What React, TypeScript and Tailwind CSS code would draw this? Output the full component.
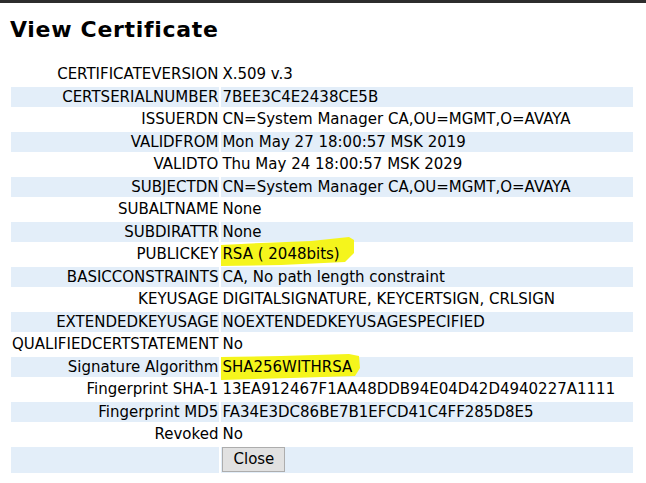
import React from 'react';

interface CertRow {
    label: string;
    value: React.ReactNode;
}

// marker-pen highlight drawn behind a bit of text
const Highlight: React.FC<{ children: React.ReactNode; variant: 'key' | 'sig' }> = ({ children, variant }) => {
    if (variant === 'key') {
        return (
            <span className="relative inline-block">
                <svg className="absolute left-[-1px] top-[-8px] w-[134px] h-[29px]" viewBox="0 0 134 29">
                    <path d="M0 8 L40 6 L90 4 L128 0 L133 3 L133 16 L124 25 L60 28 L0 29 Z" fill="#f5f51c" />
                </svg>
                <span className="relative">{children}</span>
            </span>
        );
    }
    return (
        <span className="relative inline-block">
            <svg className="absolute left-[-1px] top-[-4px] w-[140px] h-[26px]" viewBox="0 0 140 26">
                <path d="M0 3 L60 2 L128 0 L138 2 L139 14 L134 22 L70 24 L0 26 Z" fill="#f5f51c" />
            </svg>
            <span className="relative">{children}</span>
        </span>
    );
};

const rows: CertRow[] = [
    { label: 'CERTIFICATEVERSION', value: 'X.509 v.3' },
    { label: 'CERTSERIALNUMBER', value: '7BEE3C4E2438CE5B' },
    { label: 'ISSUERDN', value: 'CN=System Manager CA,OU=MGMT,O=AVAYA' },
    { label: 'VALIDFROM', value: 'Mon May 27 18:00:57 MSK 2019' },
    { label: 'VALIDTO', value: 'Thu May 24 18:00:57 MSK 2029' },
    { label: 'SUBJECTDN', value: 'CN=System Manager CA,OU=MGMT,O=AVAYA' },
    { label: 'SUBALTNAME', value: 'None' },
    { label: 'SUBDIRATTR', value: 'None' },
    { label: 'PUBLICKEY', value: <Highlight variant="key">RSA ( 2048bits)</Highlight> },
    { label: 'BASICCONSTRAINTS', value: 'CA, No path length constraint' },
    { label: 'KEYUSAGE', value: 'DIGITALSIGNATURE, KEYCERTSIGN, CRLSIGN' },
    { label: 'EXTENDEDKEYUSAGE', value: 'NOEXTENDEDKEYUSAGESPECIFIED' },
    { label: 'QUALIFIEDCERTSTATEMENT', value: 'No' },
    { label: 'Signature Algorithm', value: <Highlight variant="sig">SHA256WITHRSA</Highlight> },
    { label: 'Fingerprint SHA-1', value: '13EA912467F1AA48DDB94E04D42D4940227A1111' },
    { label: 'Fingerprint MD5', value: 'FA34E3DC86BE7B1EFCD41C4FF285D8E5' },
    { label: 'Revoked', value: 'No' }
];

const App: React.FC = () => {
    return (
        <div className="min-h-[483px] w-[646px] bg-white text-black font-['DejaVu_Sans',Verdana,sans-serif]">
            <div className="h-[3px] bg-[#2d2d2d]" />
            <h1 className="pt-[14px] pl-[10px] text-[22px] leading-[25px] font-bold tracking-[0.7px]">View Certificate</h1>

            <table className="mt-[20px] ml-[9px] w-[626px] border-separate border-spacing-[2px] text-[15px] leading-[18px]">
                <tbody>
                    {rows.map((row, index) => (
                        <tr key={row.label} className={index % 2 === 1 ? 'bg-[#e3eef9]' : ''}>
                            <td className="w-[208px] h-[20.5px] p-px text-right whitespace-nowrap">{row.label}</td>
                            <td className="h-[20.5px] p-px whitespace-nowrap">{row.value}</td>
                        </tr>
                    ))}
                    {/* Close button row */}
                    <tr className="bg-[#e3eef9]">
                        <td className="h-[26px] p-0" />
                        <td className="h-[26px] p-0 pl-px">
                            <button className="block w-[63px] h-[25px] bg-[#e1e1e1] border border-[#adadad] text-[15px] leading-[23px] text-black font-['DejaVu_Sans',sans-serif]">
                                Close
                            </button>
                        </td>
                    </tr>
                </tbody>
            </table>
        </div>
    );
};

export default App;
